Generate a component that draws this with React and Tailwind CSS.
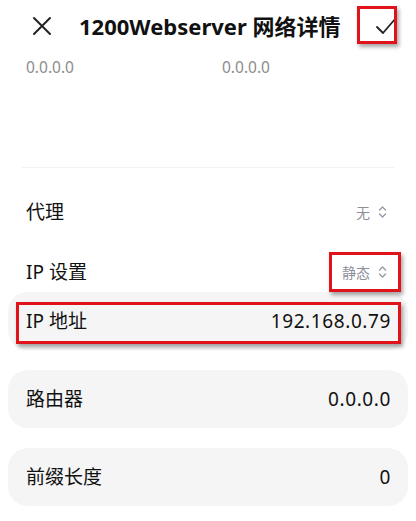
import React from "react";

const font = { fontFamily: '"Noto Sans", "Noto Sans CJK SC", sans-serif' };

const UpDown = () => (
  <svg width="9" height="14" viewBox="0 0 9 14" fill="none" stroke="#9a9aa6" strokeWidth="1.4" strokeLinecap="round" strokeLinejoin="round">
    <path d="M1.5 5 L4.5 2 L7.5 5" />
    <path d="M1.5 9 L4.5 12 L7.5 9" />
  </svg>
);

const Mark = ({ className }) => (
  <div className={`absolute border-[3px] border-[#e0131b] shadow-[2px_3px_4px_rgba(0,0,0,0.35)] pointer-events-none ${className}`} />
);

const Card = ({ label, value }) => (
  <div className="mx-2 h-[58px] rounded-[20px] bg-[#f5f5f5] flex items-center justify-between pl-[18px] pr-[17px]">
    <span className="text-[19px] text-[#111]">{label}</span>
    <span className="text-[19px] text-[#111] tracking-[0.6px]">{value}</span>
  </div>
);

export default function App() {
  return (
    <div className="relative w-[416px] h-[521px] bg-white overflow-hidden" style={font}>
      {/* header */}
      <div className="h-[52px] flex items-center">
        <div className="w-[79px] flex justify-center pl-1">
          <svg width="20" height="20" viewBox="0 0 20 20" stroke="#222" strokeWidth="2" strokeLinecap="round">
            <path d="M2 2 L18 18 M18 2 L2 18" />
          </svg>
        </div>
        <h1 className="text-[22px] font-bold text-[#111]">1200Webserver 网络详情</h1>
        <div className="ml-auto w-[56px] flex justify-center pr-1">
          <svg width="24" height="20" viewBox="0 0 24 20" fill="none" stroke="#222" strokeWidth="1.8" strokeLinecap="round" strokeLinejoin="round">
            <path d="M3 11 L9 17 L21.5 2.5" />
          </svg>
        </div>
      </div>
      <Mark className="left-[357px] top-[6px] w-[40px] h-[38px]" />

      {/* faded previous fields */}
      <div className="flex text-[15.5px] text-[#8c8c8c] mt-[4px] h-[24px] items-center">
        <span className="pl-[26px] w-[222px]">0.0.0.0</span>
        <span>0.0.0.0</span>
      </div>

      <div className="mx-[22px] mt-[87px] h-px bg-[#f2f2f2]" />

      {/* proxy */}
      <div className="h-[60px] mt-[14px] flex items-center justify-between pl-[26px] pr-[29px]">
        <span className="text-[19px] text-[#111]">代理</span>
        <span className="flex items-center gap-[8px] text-[14px] text-[#8f8f9c]">无 <UpDown /></span>
      </div>
      <div className="h-[60px] flex items-center justify-between pl-[26px] pr-[29px]">
        <span className="text-[19px] text-[#111]">IP 设置</span>
        <span className="flex items-center gap-[8px] text-[14px] text-[#8f8f9c]">静态 <UpDown /></span>
      </div>
      <Mark className="left-[329px] top-[252px] w-[72px] h-[40px]" />

      {/* cards */}
      <div className="flex flex-col gap-[20px] mt-[-10px]">
        <Card label="IP 地址" value="192.168.0.79" />
        <Card label="路由器" value="0.0.0.0" />
        <Card label="前缀长度" value="0" />
      </div>
      <Mark className="left-[16px] top-[302px] w-[385px] h-[42px]" />
    </div>
  );
}
